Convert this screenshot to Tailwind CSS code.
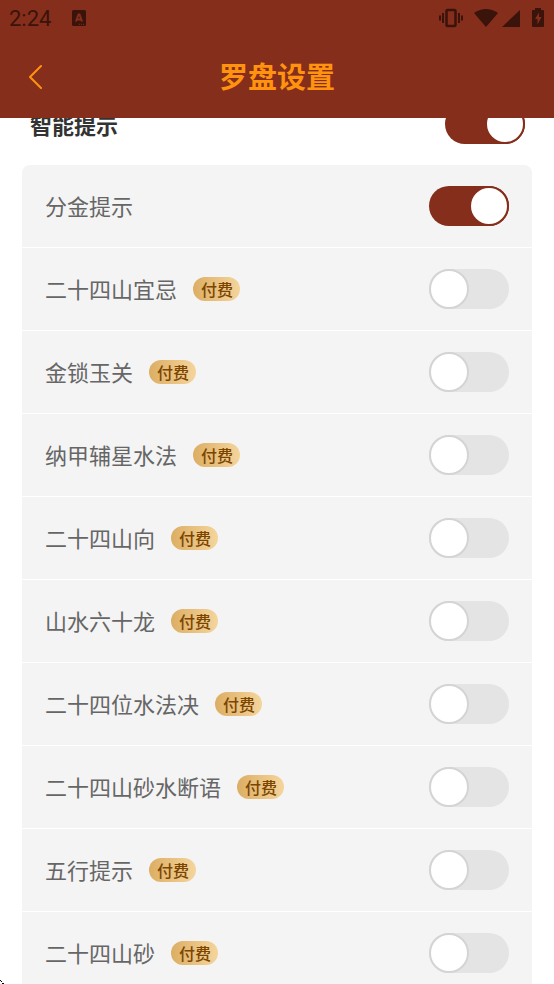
<!DOCTYPE html>
<html lang="zh-CN">
<head>
<meta charset="utf-8">
<meta name="viewport" content="width=device-width, initial-scale=1">
<title>罗盘设置</title>
<script src="https://cdn.jsdelivr.net/npm/@tailwindcss/browser@4"></script>
</head>
<body class="relative flex h-screen flex-col overflow-hidden bg-white font-['Noto_Sans_CJK_SC',sans-serif]">
<header class="shrink-0 bg-[#852e1b]">
  <div class="flex h-9 items-center pr-[10px] pl-[9px] text-[#3a130b]">
    <span class="pt-0.5 font-[Roboto,sans-serif] text-[22px] leading-6">2:24</span>
    <svg class="ml-5 size-4" viewBox="0 0 16 16" aria-hidden="true"><rect x="1" y="0" width="14" height="16" rx="1.5" fill="currentColor"/><path d="M5 11.500 7.500 4.500h1l2.500 7M6 9.500h4" fill="none" stroke="#852e1b" stroke-width="2"/><path d="M8 14.300h6" stroke="#852e1b" stroke-width="1" stroke-dasharray="1 1"/></svg>
    <div class="ml-auto flex items-center">
      <svg class="h-5 w-[26px]" viewBox="0 0 26 20" fill="none" stroke="currentColor" aria-hidden="true"><rect x="8.500" y="2" width="9" height="16" rx="1" stroke-width="2.500"/><path d="M5 5v10M21 5v10M2 7.500v5M24 7.500v5" stroke-width="2"/></svg>
      <svg class="ml-2.5 h-5 w-6" viewBox="0 0 24 20" fill="currentColor" aria-hidden="true"><path d="M0 5Q12-3 24 5L12 19Z"/></svg>
      <svg class="ml-1 h-5 w-[18px]" viewBox="0 0 18 20" fill="currentColor" aria-hidden="true"><path d="M0 19 18 2v17Z"/></svg>
      <svg class="ml-3 h-5 w-3" viewBox="0 0 12 20" aria-hidden="true"><path d="M1 2h2V0h6v2h2q1 0 1 1v15q0 1-1 1H1q-1 0-1-1V3q0-1 1-1Z" fill="currentColor"/><path d="M7 4.500 3 11h2.500v5.500L9.500 9H7Z" fill="#852e1b"/></svg>
    </div>
  </div>
  <div class="grid h-[82px] grid-cols-[72px_1fr_72px] items-center pb-1">
    <button type="button" aria-label="返回" class="flex h-16 items-center pt-1 pl-7"><svg class="h-6 w-4" viewBox="0 0 16 24" fill="none" stroke="#ff930f" stroke-width="2" stroke-linecap="round" stroke-linejoin="round" aria-hidden="true"><path d="M13 1 2 12l11 11"/></svg></button>
    <h1 class="text-center text-[29px] leading-10 font-bold text-[#ff930f]">罗盘设置</h1>
  </div>
</header>
<main class="min-h-0 flex-1 overflow-hidden">
  <div class="-mt-[35px] flex h-[82px] items-center justify-between pr-[29px] pl-[30px]">
    <label for="all" class="text-[22px] leading-8 font-bold text-[#333]">智能提示</label>
    <input id="all" type="checkbox" role="switch" checked class="relative h-10 w-20 appearance-none rounded-full bg-[#e4e4e4] before:absolute before:top-0 before:left-0 before:size-10 before:rounded-full before:border-2 before:border-[#d4d4d4] before:bg-white checked:bg-[#852e1b] checked:before:left-10 checked:before:border-[#852e1b]">
  </div>
  <ul id="list" class="mx-[22px] flex flex-col gap-px overflow-hidden rounded-lg"></ul>
</main>
<svg class="absolute bottom-0 left-0 size-1" viewBox="0 0 4 4" shape-rendering="crispEdges" aria-hidden="true"><path d="M0 0h1v1H0ZM1 1h1v1H1ZM2 3h2v1H2Z"/></svg>
<template id="row">
  <li class="flex h-[82px] items-center bg-[#f4f4f4] px-[23px]">
    <label class="pb-0.5 text-[22px] leading-8 text-[#666]"></label>
    <span class="ml-4 flex h-6 items-center rounded-full bg-linear-to-r from-[#dcae64] to-[#f5d59c] pr-[7px] pl-2 text-[16px] leading-6 font-medium text-[#7b4500]">付费</span>
    <input type="checkbox" role="switch" class="relative ml-auto h-10 w-20 shrink-0 appearance-none rounded-full bg-[#e4e4e4] before:absolute before:top-0 before:left-0 before:size-10 before:rounded-full before:border-2 before:border-[#d4d4d4] before:bg-white checked:bg-[#852e1b] checked:before:left-10 checked:before:border-[#852e1b]">
  </li>
</template>
<script>
const names = ['分金提示','二十四山宜忌','金锁玉关','纳甲辅星水法','二十四山向','山水六十龙','二十四位水法决','二十四山砂水断语','五行提示','二十四山砂'];
names.forEach((name, i) => {
  const row = document.getElementById('row').content.cloneNode(true);
  const label = row.querySelector('label'), input = row.querySelector('input');
  label.textContent = name;
  label.htmlFor = input.id = 'opt' + i;
  if (i === 0) { input.checked = true; row.querySelector('span').remove(); }
  document.getElementById('list').append(row);
});
</script>
</body>
</html>
